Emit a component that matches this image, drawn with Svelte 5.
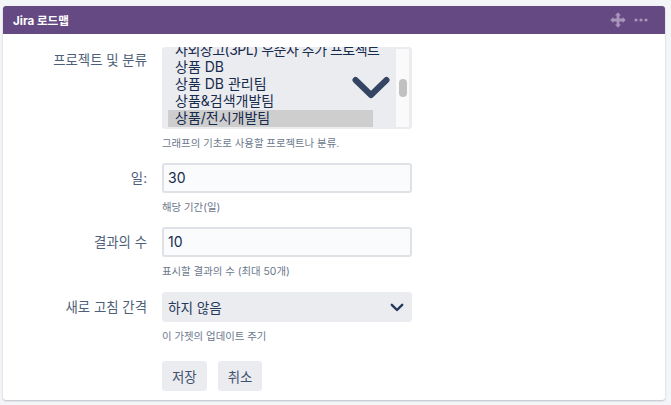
<script lang="ts">
	const projects = ['사외창고(3PL) 우준사 추가 프로젝트', '상품 DB', '상품 DB 관리팀', '상품&검색개발팀', '상품/전시개발팀'];
	const selected = '상품/전시개발팀';
</script>

<div class="page">
	<section class="gadget">
		<header class="title-bar">
			<h1>Jira 로드맵</h1>
			<div class="tools">
				<svg width="16" height="16" viewBox="0 0 16 16" aria-hidden="true">
					<path d="M8 .3 11 3.4H9.4V6.6H12.6V5L15.7 8 12.6 11V9.4H9.4V12.6H11L8 15.7 5 12.6H6.6V9.4H3.4V11L.3 8 3.4 5V6.6H6.6V3.4H5Z" />
				</svg>
				<svg width="14" height="4" viewBox="0 0 14 4" aria-hidden="true">
					<circle cx="2" cy="2" r="1.6" />
					<circle cx="7" cy="2" r="1.6" />
					<circle cx="12" cy="2" r="1.6" />
				</svg>
			</div>
		</header>

		<form class="form">
			<div class="field">
				<span class="label top">프로젝트 및 분류</span>
				<div class="control">
					<div class="listbox">
						<ul>
							{#each projects as project}
								<li class:selected={project === selected}>{project}</li>
							{/each}
						</ul>
						<div class="scrollbar"><div class="thumb"></div></div>
						<svg class="big-chevron" width="38" height="24" viewBox="0 0 38 24" aria-hidden="true">
							<path d="M3.5 4 19 19 34.5 4" />
						</svg>
					</div>
					<p class="hint">그래프의 기초로 사용할 프로젝트나 분류.</p>
				</div>
			</div>

			<div class="field">
				<span class="label">일:</span>
				<div class="control">
					<div class="input">30</div>
					<p class="hint">해당 기간(일)</p>
				</div>
			</div>

			<div class="field wide-gap">
				<span class="label">결과의 수</span>
				<div class="control">
					<div class="input">10</div>
					<p class="hint">표시할 결과의 수 (최대 50개)</p>
				</div>
			</div>

			<div class="field">
				<span class="label">새로 고침 간격</span>
				<div class="control">
					<div class="select">
						<span>하지 않음</span>
						<svg width="14" height="9" viewBox="0 0 14 9" aria-hidden="true">
							<path d="M1.8 1.8 7 7 12.2 1.8" />
						</svg>
					</div>
					<p class="hint">이 가젯의 업데이트 주기</p>
				</div>
			</div>

			<div class="buttons">
				<button type="button">저장</button>
				<button type="button">취소</button>
			</div>
		</form>
	</section>
</div>

<style>
	:global(body) {
		background: #f4f5f7;
		font-family: Inter, 'Noto Sans CJK KR', sans-serif;
		color: #172b4d;
	}

	.page {
		padding: 6px 6px 5px 3px;
		height: 405px;
		box-sizing: border-box;
		overflow: hidden;
	}

	.gadget {
		height: 394px;
		background: #fff;
		border-radius: 3px;
		box-shadow: 0 1px 2px rgba(9, 30, 66, 0.25);
		overflow: hidden;
	}

	.title-bar {
		height: 28px;
		padding: 0 17px 0 10px;
		background: #654982;
		display: flex;
		align-items: center;
		justify-content: space-between;
	}

	h1 {
		margin: 0;
		font-size: 11.6px;
		font-weight: 700;
		color: #fff;
	}

	.tools {
		display: flex;
		align-items: center;
		gap: 8px;
		fill: #a895bb;
	}

	.form {
		padding-top: 13px;
	}

	.field {
		display: flex;
		margin-bottom: 12px;
	}

	.field.wide-gap {
		margin-bottom: 13px;
	}

	.label {
		width: 144px;
		margin-right: 15px;
		text-align: right;
		font-size: 13.4px;
		line-height: 30px;
		color: #505f79;
	}

	.label.top {
		line-height: 26px;
	}

	.control {
		width: 250px;
	}

	.hint {
		margin: 0;
		padding-top: 8px;
		font-size: 10.4px;
		line-height: 14px;
		color: #6b778c;
	}

	.listbox {
		position: relative;
		height: 82px;
		box-sizing: border-box;
		padding: 2px 3px 2px 6px;
		background: #ebecf0;
		border-radius: 3px;
		overflow: hidden;
		display: flex;
	}

	ul {
		flex: 1;
		margin: -7px 0 0;
		padding: 0;
		list-style: none;
		font-size: 14px;
		line-height: 15px;
	}

	li {
		width: 205px;
		padding: 0 0 2px 7px;
		box-sizing: border-box;
		white-space: nowrap;
	}

	li:first-child {
		letter-spacing: -0.5px;
	}

	li.selected {
		background: #cecece;
	}

	.scrollbar {
		width: 13px;
		height: 78px;
		background: #fafafa;
		flex: none;
		padding: 30px 2px 0 3px;
		box-sizing: border-box;
	}

	.thumb {
		width: 8px;
		height: 18px;
		border-radius: 4px;
		background: #c1c1c1;
	}

	.big-chevron {
		position: absolute;
		left: 190px;
		top: 29px;
		fill: none;
		stroke: #344563;
		stroke-width: 6;
		stroke-linecap: round;
		stroke-linejoin: round;
	}

	.input {
		height: 30px;
		box-sizing: border-box;
		padding-left: 4px;
		border: 2px solid #dfe1e6;
		border-radius: 3px;
		background: #fafbfc;
		font-size: 14px;
		line-height: 26px;
	}

	.select {
		height: 30px;
		box-sizing: border-box;
		padding: 0 8px 0 6px;
		display: flex;
		align-items: center;
		justify-content: space-between;
		border-radius: 3px;
		background: #ebecf0;
		font-size: 13.6px;
		color: #253858;
	}

	.select svg {
		fill: none;
		stroke: #253858;
		stroke-width: 2.4;
		stroke-linecap: round;
		stroke-linejoin: round;
	}

	.buttons {
		display: flex;
		gap: 11px;
		margin: 17px 0 0 159px;
	}

	button {
		height: 30px;
		padding: 0 10px;
		border: none;
		border-radius: 3px;
		background: #ebecf0;
		font: inherit;
		font-size: 13.4px;
		color: #42526e;
	}
</style>
